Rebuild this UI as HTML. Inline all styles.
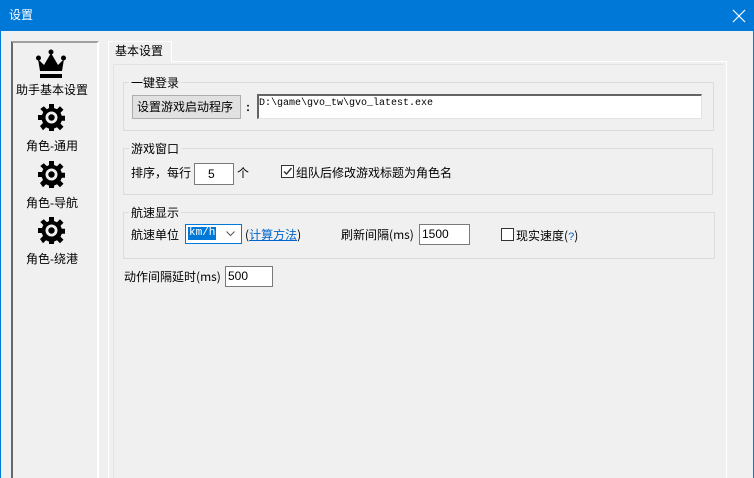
<!DOCTYPE html>
<html><head><meta charset="utf-8"><style>
*{box-sizing:border-box;margin:0;padding:0}
body{width:754px;height:478px;background:#f0f0f0;position:relative;overflow:hidden;font-family:"Liberation Sans","Noto Sans CJK SC",sans-serif;font-size:12px;color:#000}
.a{position:absolute}
.t{position:absolute;white-space:nowrap;line-height:16px}
.grp{position:absolute;border:1px solid #dcdcdc}
.inp{position:absolute;background:#fff;border:1px solid #7a7a7a}
.mono{font-family:"Liberation Mono","Noto Sans CJK SC",monospace;font-size:10px}
.chk{position:absolute;width:13px;height:13px;border:1px solid #333;background:#fff}
.lbl{position:absolute;width:86px;text-align:center;font-size:12px;line-height:16px}
.c{font-family:"Noto Sans CJK SC",sans-serif}
</style></head><body>
<div class="a" style="left:0;top:0;width:754px;height:31px;background:#0078d7"></div>
<div class="t" style="left:9px;top:7px;color:#fff;font-size:12px">设置</div>
<svg class="a" style="left:732px;top:9px" width="14" height="14"><path d="M1 1L13 13M13 1L1 13" stroke="#fff" stroke-width="1.2"/></svg>
<div class="a" style="left:0;top:31px;width:1px;height:447px;background:#0078d7"></div>
<div class="a" style="left:753px;top:31px;width:1px;height:447px;background:#0078d7"></div>

<div class="a" style="left:11px;top:41px;width:88px;height:437px;border-left:2px solid #696969;border-top:2px solid #a0a0a0;border-right:2px solid #fff"></div>
<svg class="a" style="left:36px;top:49px" width="30" height="30" viewBox="0 0 30 30">
<circle cx="15" cy="3" r="2.5"/><circle cx="2.5" cy="9" r="2.5"/><circle cx="27.5" cy="9" r="2.5"/>
<path d="M2 10L8 16L15 4L22 16L28 10L26 22H4Z"/><rect x="4" y="25" width="22" height="4"/></svg>
<div class="lbl" style="left:9px;top:82px">助手基本设置</div>
<svg width="0" height="0" style="position:absolute"><defs><g id="g"><path d="M11 0h5v4l3 1.3 3-3 3.5 3.5-3 3 1.3 3h4v5h-4l-1.3 3 3 3-3.5 3.5-3-3-3 1.3v4h-5v-4l-3-1.3-3 3L2 22l3-3-1.3-3H0v-5h4l1.3-3-3-3L5.8 2.3l3 3L11 4z"/><circle cx="13.5" cy="13.5" r="6" fill="#f0f0f0"/><circle cx="13.5" cy="13.5" r="3.2"/></g></defs></svg>
<svg class="a" style="left:38px;top:104px" width="27" height="27"><use href="#g"/></svg>
<div class="lbl" style="left:9px;top:138px">角色-通用</div>
<svg class="a" style="left:38px;top:161px" width="27" height="27"><use href="#g"/></svg>
<div class="lbl" style="left:9px;top:195px">角色-导航</div>
<svg class="a" style="left:38px;top:217px" width="27" height="27"><use href="#g"/></svg>
<div class="lbl" style="left:9px;top:251px">角色-绕港</div>

<div class="a" style="left:108px;top:61px;width:619px;height:417px;border-left:1px solid #fff;border-top:1px solid #fff;border-right:1px solid #fff"></div>
<div class="a" style="left:108px;top:41px;width:64px;height:21px;border:1px solid #fff;border-bottom:none;background:#f0f0f0"></div>
<div class="t" style="left:115px;top:43px">基本设置</div>
<div class="a" style="left:113px;top:64px;width:610px;height:414px;border-left:1px solid #e3e3e3;border-top:1px solid #e3e3e3"></div>

<div class="grp" style="left:123px;top:82px;width:591px;height:49px"></div>
<div class="t" style="left:129px;top:75px;background:#f0f0f0;padding:0 2px">一键登录</div>
<div class="a" style="left:132px;top:95px;width:109px;height:24px;background:#e1e1e1;border:1px solid #adadad"></div>
<div class="t" style="left:137px;top:99px">设置游戏启动程序</div>
<div class="t" style="left:246px;top:99px;font-weight:bold">:</div>
<div class="inp" style="left:257px;top:94px;width:445px;height:25px;border-color:#e3e3e3;border-top:2px solid #646464;border-left:2px solid #646464"></div>
<div class="t mono" style="left:259px;top:96px">D:\game\gvo_tw\gvo_latest.exe</div>

<div class="grp" style="left:123px;top:148px;width:590px;height:47px"></div>
<div class="t" style="left:129px;top:141px;background:#f0f0f0;padding:0 2px">游戏窗口</div>
<div class="t" style="left:131px;top:165px">排序，每行</div>
<div class="inp" style="left:194px;top:163px;width:40px;height:22px"></div>
<div class="t" style="left:208px;top:166px">5</div>
<div class="t" style="left:237px;top:165px">个</div>
<div class="chk" style="left:281px;top:165px"></div>
<svg class="a" style="left:282px;top:166px" width="11" height="11"><path d="M2 5.5L4.5 8L9.5 2" stroke="#333" stroke-width="1.4" fill="none"/></svg>
<div class="t" style="left:296px;top:165px">组队后修改游戏标题为角色名</div>

<div class="grp" style="left:123px;top:212px;width:592px;height:47px"></div>
<div class="t" style="left:129px;top:205px;background:#f0f0f0;padding:0 2px">航速显示</div>
<div class="t" style="left:131px;top:227px">航速单位</div>
<div class="a" style="left:185px;top:224px;width:57px;height:20px;background:#fff;border:1px solid #0078d7"></div>
<div class="t mono" style="left:188px;top:227px;background:#0078d7;color:#fff;line-height:13px;padding:0 1px;font-size:11px">km/h</div>
<svg class="a" style="left:226px;top:231px" width="9" height="6"><path d="M0.5 0.5L4.5 4.5L8.5 0.5" stroke="#555" fill="none"/></svg>
<div class="t" style="left:245px;top:227px"><span class="c">(</span><span style="color:#0066cc;text-decoration:underline">计算方法</span><span class="c">)</span></div>
<div class="t" style="left:341px;top:227px">刷新间隔<span class="c">(ms)</span></div>
<div class="inp" style="left:419px;top:224px;width:51px;height:21px"></div>
<div class="t" style="left:422px;top:226px;font-size:12px">1500</div>
<div class="chk" style="left:501px;top:228px"></div>
<div class="t" style="left:516px;top:228px">现实速度<span class="c">(</span><span style="color:#0066cc;font-size:11px">?</span><span class="c">)</span></div>

<div class="t" style="left:124px;top:269px">动作间隔延时<span class="c">(ms)</span></div>
<div class="inp" style="left:225px;top:266px;width:48px;height:21px"></div>
<div class="t" style="left:228px;top:268px;font-size:12px">500</div>
</body></html>
